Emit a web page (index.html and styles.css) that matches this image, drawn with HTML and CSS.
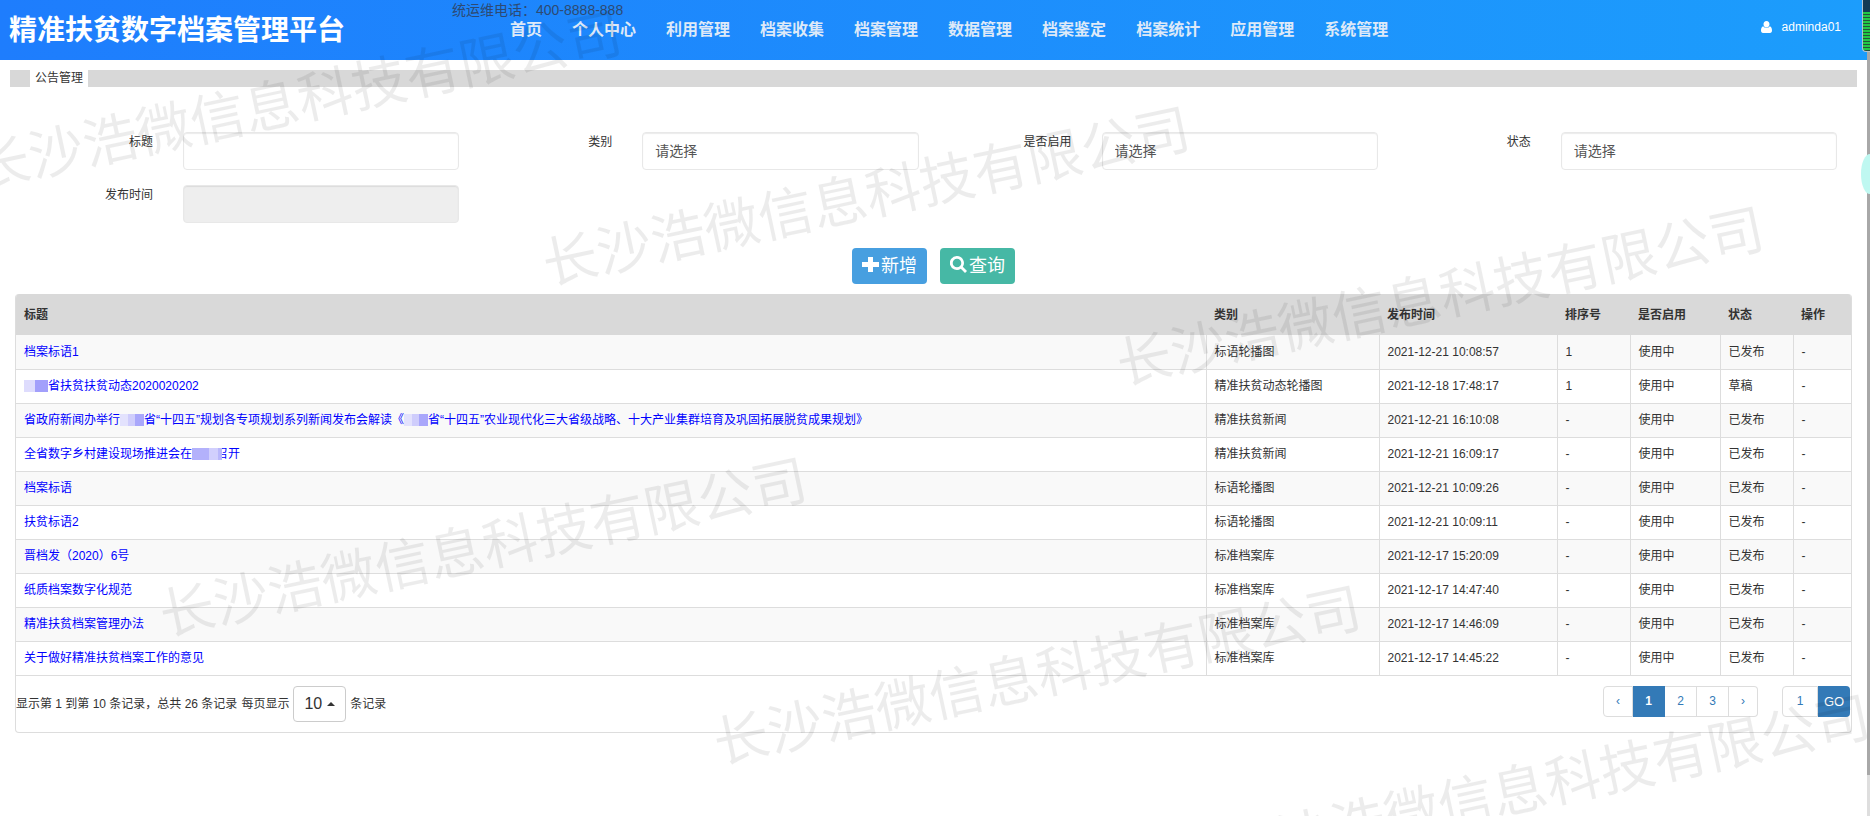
FILE: index.html
```html
<!DOCTYPE html>
<html lang="zh-CN">
<head>
<meta charset="utf-8">
<title>公告管理</title>
<link rel="stylesheet" href="styles.css">
</head>
<body>
<div class="page">
  <header class="header">
    <h1 class="brand">精准扶贫数字档案管理平台</h1>
    <p class="hotline">统运维电话：400-8888-888</p>
    <nav class="nav">
      <a href="#">首页</a><a href="#">个人中心</a><a href="#">利用管理</a><a href="#">档案收集</a><a href="#">档案管理</a><a href="#">数据管理</a><a href="#">档案鉴定</a><a href="#">档案统计</a><a href="#">应用管理</a><a href="#">系统管理</a>
    </nav>
    <a class="user" href="#">
      <svg class="user-icon" viewBox="0 0 11 12" aria-hidden="true"><path d="M5.500 0C7.400 0 8.500 1.300 8.500 3.200S7.300 6.500 5.500 6.500 2.500 5.100 2.500 3.200 3.600 0 5.500 0ZM2.300 5.300C3.300 7.400 7.700 7.400 8.700 5.300 10.300 5.700 11 7.200 11 9.600 11 11.200 10.300 12 9 12H2C.7 12 0 11.200 0 9.600 0 7.200.7 5.700 2.300 5.300Z"/></svg>
      adminda01
    </a>
  </header>
  <main class="main">
    <h2 class="crumb">公告管理</h2>
    <form class="search">
      <div class="fields">
        <div class="field"><label for="title">标题</label><input id="title" type="text"></div>
        <div class="field"><label for="kind">类别</label><select id="kind"><option>请选择</option></select></div>
        <div class="field"><label for="enabled">是否启用</label><select id="enabled"><option>请选择</option></select></div>
        <div class="field"><label for="state">状态</label><select id="state"><option>请选择</option></select></div>
        <div class="field"><label for="time">发布时间</label><input id="time" type="text" readonly></div>
      </div>
      <div class="actions">
        <button class="btn btn-add" type="button"><svg viewBox="0 0 17 17" aria-hidden="true"><path d="M6 1h5v5h6v5h-6v5H6v-5H0V6h6z"/></svg>新增</button>
        <button class="btn btn-find" type="button"><svg viewBox="0 0 17 17" aria-hidden="true"><path fill-rule="evenodd" d="M7 0a7 7 0 0 1 5.800 10.800L17 15l-2 2-4.200-4.200A7 7 0 1 1 7 0Zm0 2.700a4.300 4.300 0 1 0 0 8.600 4.300 4.300 0 0 0 0-8.600Z"/></svg>查询</button>
      </div>
    </form>
    <section class="panel">
      <table class="grid">
        <colgroup><col><col class="c-kind"><col class="c-time"><col class="c-order"><col class="c-enabled"><col class="c-state"><col class="c-op"></colgroup>
        <thead><tr><th>标题</th><th>类别</th><th>发布时间</th><th>排序号</th><th>是否启用</th><th>状态</th><th>操作</th></tr></thead>
        <tbody>
          <tr><td><a href="#">档案标语1</a></td><td>标语轮播图</td><td>2021-12-21 10:08:57</td><td>1</td><td>使用中</td><td>已发布</td><td>-</td></tr>
          <tr><td><a href="#"><i class="mask"></i>省扶贫扶贫动态2020020202</a></td><td>精准扶贫动态轮播图</td><td>2021-12-18 17:48:17</td><td>1</td><td>使用中</td><td>草稿</td><td>-</td></tr>
          <tr><td><a href="#">省政府新闻办举行<i class="mask mask-pale"></i>省“十四五”规划各专项规划系列新闻发布会解读《<i class="mask mask-pale"></i>省“十四五”农业现代化三大省级战略、十大产业集群培育及巩固拓展脱贫成果规划》</a></td><td>精准扶贫新闻</td><td>2021-12-21 16:10:08</td><td>-</td><td>使用中</td><td>已发布</td><td>-</td></tr>
          <tr><td><a href="#">全省数字乡村建设现场推进会在<i class="mask mask-over"></i>召开</a></td><td>精准扶贫新闻</td><td>2021-12-21 16:09:17</td><td>-</td><td>使用中</td><td>已发布</td><td>-</td></tr>
          <tr><td><a href="#">档案标语</a></td><td>标语轮播图</td><td>2021-12-21 10:09:26</td><td>-</td><td>使用中</td><td>已发布</td><td>-</td></tr>
          <tr><td><a href="#">扶贫标语2</a></td><td>标语轮播图</td><td>2021-12-21 10:09:11</td><td>-</td><td>使用中</td><td>已发布</td><td>-</td></tr>
          <tr><td><a href="#">晋档发（2020）6号</a></td><td>标准档案库</td><td>2021-12-17 15:20:09</td><td>-</td><td>使用中</td><td>已发布</td><td>-</td></tr>
          <tr><td><a href="#">纸质档案数字化规范</a></td><td>标准档案库</td><td>2021-12-17 14:47:40</td><td>-</td><td>使用中</td><td>已发布</td><td>-</td></tr>
          <tr><td><a href="#">精准扶贫档案管理办法</a></td><td>标准档案库</td><td>2021-12-17 14:46:09</td><td>-</td><td>使用中</td><td>已发布</td><td>-</td></tr>
          <tr><td><a href="#">关于做好精准扶贫档案工作的意见</a></td><td>标准档案库</td><td>2021-12-17 14:45:22</td><td>-</td><td>使用中</td><td>已发布</td><td>-</td></tr>
        </tbody>
      </table>
      <footer class="panel-foot">
        <div class="summary">
          <span>显示第 1 到第 10 条记录，总共 26 条记录</span>
          <span>每页显示</span>
          <button class="size" type="button">10<span class="caret"></span></button>
          <span>条记录</span>
        </div>
        <div class="pager">
          <nav class="pages"><a href="#">‹</a><a class="current" href="#">1</a><a href="#">2</a><a href="#">3</a><a href="#">›</a></nav>
          <div class="jump"><input type="text" value="1" aria-label="页码"><button type="button">GO</button></div>
        </div>
      </footer>
    </section>
  </main>
</div>
<div class="scroll"><div class="thumb"></div></div>
<div class="meter"></div>
<div class="bubble"></div>
<div class="marks" aria-hidden="true">
  <span class="mark m1">长沙浩微信息科技有限公司</span>
  <span class="mark m2">长沙浩微信息科技有限公司</span>
  <span class="mark m3">长沙浩微信息科技有限公司</span>
  <span class="mark m4">长沙浩微信息科技有限公司</span>
  <span class="mark m5">长沙浩微信息科技有限公司</span>
  <span class="mark m6">长沙浩微信息科技有限公司</span>
</div>
</body>
</html>
```
FILE: styles.css
```css
* { box-sizing: border-box; }
body {
  position: relative;
  display: flex;
  min-height: 100vh;
  margin: 0;
  overflow: hidden;
  background: #fff;
  color: #333;
  font: 12px/20px "Liberation Sans", "Noto Sans CJK SC", sans-serif;
}
a { text-decoration: none; }
input, select, button { margin: 0; font-family: inherit; }
.page { flex: 1; min-width: 0; }

.header {
  position: relative;
  display: flex;
  align-items: center;
  height: 60px;
  padding: 0 26px 0 9px;
  background: linear-gradient(90deg, #1e7dfd, #1c9dfc);
}
.brand { margin: 0; padding-top: 2px; color: #fff; font-size: 28px; line-height: 58px; white-space: nowrap; }
.hotline { position: absolute; left: 452px; top: 0; margin: 0; color: #2d4a73; font-size: 14px; }
.nav { display: flex; flex: 1; gap: 30px; margin-left: 165px; white-space: nowrap; }
.nav a { color: #dde9f8; font-size: 16px; font-weight: bold; }
.user { display: flex; align-items: center; gap: 10px; padding-bottom: 6px; color: #fff; }
.user-icon { width: 11px; height: 12px; fill: #fff; }

.main { padding: 10px 15px 0 15px; }
.crumb {
  display: flex;
  gap: 5px;
  margin: 0 -5px 45px;
  font-size: 12px;
  font-weight: normal;
  line-height: 17px;
}
.crumb::before, .crumb::after { content: ""; background: #d8d8d8; }
.crumb::before { width: 20px; }
.crumb::after { flex: 1; }

.fields { display: grid; grid-template-columns: repeat(4, 1fr); row-gap: 15px; }
.field { display: grid; grid-template-columns: 1fr 2fr; }
.field label { padding-right: 15px; text-align: right; }
.field input, .field select {
  width: calc(100% - 30px);
  height: 38px;
  margin-left: 15px;
  padding: 0 12px;
  appearance: none;
  border: 1px solid #e8e8e8;
  border-radius: 4px;
  background: #fff;
  box-shadow: inset 0 1px 1px rgba(0, 0, 0, .08);
  color: #555;
  font-size: 14px;
}
.field input:read-only { background: #eee; }

.actions { display: flex; justify-content: center; gap: 13px; margin: 25px 0 10px; }
.btn {
  display: flex;
  align-items: center;
  gap: 2px;
  height: 36px;
  padding: 0 10px 4px;
  border: 0;
  border-radius: 4px;
  color: #fff;
  font-size: 18px;
}
.btn svg { width: 17px; height: 17px; fill: #fff; }
.btn-add { background: #479fe0; }
.btn-find { background: #46b8a5; }

.panel { overflow: hidden; border: 1px solid #ddd; border-top: 0; border-radius: 4px; }
.grid { width: 100%; table-layout: fixed; border-collapse: collapse; }
.c-kind { width: 173px; }
.c-time { width: 178px; }
.c-order { width: 73px; }
.c-enabled { width: 90px; }
.c-state { width: 73px; }
.c-op { width: 58px; }
.grid th { height: 41px; padding: 0 8px; background: #d9d9d9; text-align: left; font-weight: bold; }
.grid td { height: 34px; padding: 0 8px; border: 1px solid #ddd; border-width: 0 0 1px 1px; white-space: nowrap; }
.grid td:first-child { border-left: 0; }
.grid tbody tr:nth-child(odd) { background: #f9f9f9; }
.grid a { color: #00f; }
.mask {
  position: relative;
  display: inline-block;
  width: 24px;
  height: 12px;
  vertical-align: -2px;
  background: linear-gradient(90deg, #dedcfd 46%, #a29ffb 46%);
}
.mask-pale { background: linear-gradient(90deg, #e3e2fd 35%, #cfcdfc 35% 64%, #a9a7fb 64%); }
.mask-over { width: 30px; margin-right: -6px; background: linear-gradient(90deg, #b3b1fb 55%, #d1cffd 55% 85%, #b9b7fb 85%); }

.panel-foot { display: flex; justify-content: space-between; align-items: flex-start; padding: 10px 1px; }
.summary { display: flex; align-items: center; gap: 4px; margin-left: -1px; }
.size {
  display: flex;
  align-items: center;
  gap: 5px;
  height: 36px;
  padding: 0 10px;
  border: 1px solid #ccc;
  border-radius: 4px;
  background: #fff;
  color: #333;
  font-size: 16px;
}
.caret { border: 4px solid transparent; border-top: 0; border-bottom-color: #333; }
.pager { display: flex; gap: 24px; }
.pages, .jump { display: flex; line-height: 29px; text-align: center; }
.pages a { width: 32px; border: 1px solid #ddd; border-left: 0; color: #337ab7; }
.pages a:first-child { width: 30px; border-left: 1px solid #ddd; border-radius: 4px 0 0 4px; }
.pages a:last-child { width: 29px; border-radius: 0 4px 4px 0; }
.pages .current { border-color: #337ab7; background: #337ab7; color: #fff; font-weight: bold; }
.jump input {
  width: 36px;
  border: 1px solid #ddd;
  border-radius: 4px 0 0 4px;
  color: #337ab7;
  font-size: 12px;
  text-align: center;
}
.jump button { width: 32px; padding: 0; border: 0; border-radius: 0 4px 4px 0; background: #337ab7; color: #fff; font-size: 13px; }

.scroll { width: 3px; background: #dedede; }
.thumb { height: 95vh; background: #a8a8a8; }
.meter {
  position: absolute;
  right: 0;
  top: 0;
  width: 8px;
  height: 52px;
  border: solid #b5c4cf;
  border-width: 0 0 1px 1px;
  border-radius: 0 0 0 4px;
  background: linear-gradient(#123a55 12px, transparent 12px), repeating-linear-gradient(#20c845 0 2px, #24543c 2px 3px);
}
.bubble {
  position: absolute;
  right: 0;
  top: 154px;
  width: 9px;
  height: 40px;
  border-radius: 9px 0 0 9px / 20px 0 0 20px;
  background: #bff8f1;
}

.marks { position: absolute; inset: 0; overflow: hidden; pointer-events: none; }
.mark {
  position: absolute;
  color: rgba(0, 0, 0, .075);
  font-size: 55px;
  font-weight: 400;
  line-height: 56px;
  white-space: nowrap;
  transform: rotate(-12deg);
  transform-origin: 28px 28px;
}
.m1 { left: -25px; top: 136px; }
.m2 { left: 543px; top: 232px; }
.m3 { left: 1117px; top: 332px; }
.m4 { left: 160px; top: 583px; }
.m5 { left: 714px; top: 711px; }
.m6 { left: 1223px; top: 820px; }
```
